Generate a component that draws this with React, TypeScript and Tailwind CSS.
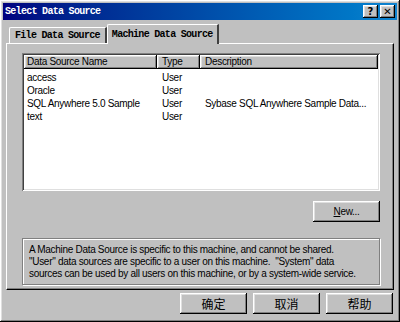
const raised =
  'bg-[#c0c0c0] shadow-[inset_-1px_-1px_#000000,inset_1px_1px_#ffffff,inset_-2px_-2px_#808080,inset_2px_2px_#dfdfdf]';
const sunken =
  'shadow-[inset_1px_1px_#808080,inset_-1px_-1px_#ffffff,inset_2px_2px_#404040,inset_-2px_-2px_#dfdfdf]';

const rows = [
  { name: 'access', type: 'User', desc: '' },
  { name: 'Oracle', type: 'User', desc: '' },
  { name: 'SQL Anywhere 5.0 Sample', type: 'User', desc: 'Sybase SQL Anywhere Sample Data...' },
  { name: 'text', type: 'User', desc: '' },
];

function TitleButton({ children }: { children: React.ReactNode }) {
  return (
    <div
      className={`${raised} w-[15px] h-[13px] flex items-center justify-center text-[10px] font-bold leading-none text-black`}
      style={{ fontFamily: '"DejaVu Sans", sans-serif' }}
    >
      {children}
    </div>
  );
}

function Button({ children, cjk }: { children: React.ReactNode; cjk?: boolean }) {
  return (
    <div
      className={`${raised} w-[67px] h-[21px] flex items-center justify-center text-black ${cjk ? 'text-[12px]' : 'text-[10px] tracking-[-0.3px]'}`}
      style={{ fontFamily: cjk ? '"Noto Sans CJK SC", sans-serif' : '"Liberation Sans", Arial, sans-serif' }}
    >
      {children}
    </div>
  );
}

export default function App() {
  const mono = { fontFamily: '"Liberation Mono", "Courier New", monospace' };
  const sans = { fontFamily: '"Liberation Sans", Arial, sans-serif' };

  return (
    <div className={`${raised} w-[400px] h-[322px] p-[3px] flex flex-col overflow-hidden`}>
      {/* title bar */}
      <div className="h-[17px] flex items-center justify-between bg-gradient-to-r from-[#000080] to-[#1084d0] pl-[2px] pr-[2px]">
        <span className="text-white text-[10px] font-bold tracking-[-0.7px]" style={mono}>
          Select Data Source
        </span>
        <div className="flex gap-[2px]">
          <TitleButton>?</TitleButton>
          <TitleButton>✕</TitleButton>
        </div>
      </div>

      {/* tabs */}
      <div className="px-[3px] mt-[4px] flex-1 flex flex-col">
        <div className="flex items-end h-[19px] pl-[3px]">
          <div
            className="h-[16px] px-[5px] flex items-center border-l border-t border-white border-r-2 border-r-[#404040] rounded-tl-[2px] text-[10px] font-bold tracking-[-0.7px] text-black whitespace-nowrap"
            style={mono}
          >
            File Data Source
          </div>
          <div
            className="relative z-10 -mb-[1px] h-[20px] px-[4px] flex items-center bg-[#c0c0c0] border-l border-t border-white border-r-2 border-r-[#404040] rounded-tl-[2px] text-[10px] font-bold tracking-[-0.7px] text-black whitespace-nowrap"
            style={mono}
          >
            Machine Data Source
          </div>
        </div>

        {/* panel */}
        <div className="h-[247px] border-l border-t border-white border-r border-b border-r-black border-b-black shadow-[inset_-1px_-1px_#808080] pl-[15px] pr-[13px] pt-[9px] flex flex-col">
          {/* list */}
          <div
            className={`${sunken} bg-white h-[138px] p-[2px] text-[10px] tracking-[-0.3px] text-black whitespace-nowrap`}
            style={sans}
          >
            <div className="flex h-[14px]">
              <div className={`${raised} w-[133px] pl-[3px] leading-[14px]`}>Data Source Name</div>
              <div className={`${raised} w-[43px] pl-[5px] leading-[14px]`}>Type</div>
              <div className={`${raised} flex-1 pl-[5px] leading-[14px]`}>Description</div>
            </div>
            <div className="pt-[2px]">
              {rows.map((r) => (
                <div key={r.name} className="flex h-[13px] leading-[13px]">
                  <div className="w-[133px] pl-[3px] overflow-hidden">{r.name}</div>
                  <div className="w-[43px] pl-[5px]">{r.type}</div>
                  <div className="flex-1 pl-[5px] overflow-hidden">{r.desc}</div>
                </div>
              ))}
            </div>
          </div>

          <div className="flex justify-end mt-[10px]">
            <Button>
              <span>
                <span className="underline">N</span>ew...
              </span>
            </Button>
          </div>

          {/* info box */}
          <div
            className="mt-[16px] h-[47px] border border-[#808080] shadow-[inset_1px_1px_#ffffff,1px_1px_#ffffff] pl-[6px] pt-[5px] text-[10px] tracking-[-0.3px] leading-[12px] text-black whitespace-nowrap overflow-hidden"
            style={sans}
          >
            <div>A Machine Data Source is specific to this machine, and cannot be shared.</div>
            <div>"User" data sources are specific to a user on this machine.&nbsp; "System" data</div>
            <div>sources can be used by all users on this machine, or by a system-wide service.</div>
          </div>
        </div>

        {/* bottom buttons */}
        <div className="flex justify-end gap-[6px] mt-[3px] pr-[1px]">
          <Button cjk>确定</Button>
          <Button cjk>取消</Button>
          <Button cjk>帮助</Button>
        </div>
      </div>
    </div>
  );
}
